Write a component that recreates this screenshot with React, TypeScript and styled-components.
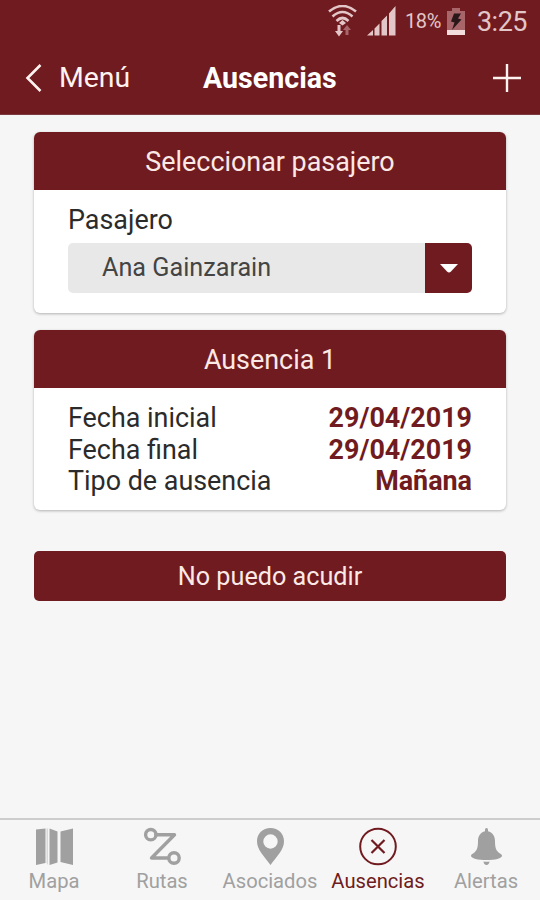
import React from "react";
import styled, { createGlobalStyle } from "styled-components";

const maroon = "#701b20";

const GlobalStyle = createGlobalStyle`
  * { box-sizing: border-box; }
  body { margin: 0; background: #f6f6f6; }
  button { font: inherit; border: 0; padding: 0; margin: 0; background: none; color: inherit; }
`;

const Screen = styled.div`
  display: flex;
  flex-direction: column;
  width: 540px;
  height: 900px;
  overflow: hidden;
  background: #f6f6f6;
  color: #2b2b2b;
  font-family: Roboto, "Liberation Sans", sans-serif;
`;

const Top = styled.header`
  flex: none;
  height: 115px;
  background: ${maroon};
  border-bottom: 1px solid #7d3a3e;
  color: #fdf3f0;
`;

const StatusBar = styled.div`
  display: flex;
  justify-content: flex-end;
  align-items: center;
  height: 42px;
  padding-right: 13px;
  color: #e3c6c7;
`;

const StatusIcon = styled.svg<{ $gap: number }>`
  display: block;
  flex: none;
  margin-right: ${(p) => p.$gap}px;
`;

const Percent = styled.span`
  font-size: 20px;
  line-height: 44px;
  letter-spacing: -0.4px;
  margin-right: 6px;
`;

const Clock = styled.span`
  font-size: 27px;
  line-height: 44px;
  letter-spacing: -0.5px;
  padding-top: 1px;
`;

const NavBar = styled.div`
  display: grid;
  grid-template-columns: 178px auto 1fr;
  align-items: center;
  height: 72px;
  padding: 0 19px 0 25px;
`;

const Back = styled.button`
  display: flex;
  align-items: center;
  gap: 17px;
  font-size: 28.4px;
  line-height: 34px;
`;

const Title = styled.h1`
  margin: 0;
  font-size: 28.6px;
  line-height: 34px;
  font-weight: 700;
  color: #fff;
`;

const Add = styled.button`
  justify-self: end;
  display: block;
  svg { display: block; }
`;

const Content = styled.main`
  flex: 1;
  display: flex;
  flex-direction: column;
  padding: 17px 34px 0;
`;

const Card = styled.section<{ $height: number }>`
  height: ${(p) => p.$height}px;
  margin-bottom: 17px;
  border-radius: 6px;
  overflow: hidden;
  background: #fff;
  box-shadow: 0 1px 3px rgba(0, 0, 0, 0.28);
`;

const CardHead = styled.h2`
  margin: 0;
  height: 58px;
  line-height: 61px;
  background: ${maroon};
  color: #fbe9e6;
  text-align: center;
  font-size: 26.9px;
  font-weight: 400;
`;

const CardBody = styled.div`
  padding: 15px 34px 0;
  font-size: 26.9px;
  line-height: 31.5px;
`;

const Select = styled.div`
  display: flex;
  height: 50px;
  margin-top: 6px;
  border-radius: 5px;
  overflow: hidden;
  background: #e8e8e8;
`;

const SelectValue = styled.span`
  flex: 1;
  padding-left: 34px;
  line-height: 50px;
  font-size: 25.2px;
  color: #444;
`;

const SelectArrow = styled.span`
  display: flex;
  align-items: center;
  justify-content: center;
  width: 47px;
  padding-top: 2px;
  background: ${maroon};
`;

const Row = styled.div`
  display: flex;
  justify-content: space-between;
`;

const Value = styled.strong`
  font-weight: 700;
  color: ${maroon};
`;

const Action = styled.button`
  height: 50px;
  margin-top: 24px;
  padding-top: 2px;
  border-radius: 5px;
  background: ${maroon};
  color: #fbe9e6;
  font-size: 25.2px;
  line-height: 48px;
`;

const TabBar = styled.nav`
  flex: none;
  display: grid;
  grid-template-columns: repeat(5, 108px);
  height: 82px;
  border-top: 2px solid #cdcdcd;
`;

const Tab = styled.button<{ $active?: boolean }>`
  display: flex;
  flex-direction: column;
  align-items: center;
  padding-top: 8px;
  color: ${(p) => (p.$active ? maroon : "#a0a0a0")};
  svg { display: block; overflow: visible; }
`;

const TabLabel = styled.span`
  margin-top: 1px;
  font-size: 20.2px;
  line-height: 24px;
  white-space: nowrap;
`;

const MapIcon = () => (
  <svg width="40" height="40" viewBox="0 0 40 40" fill="currentColor">
    <path d="M2 1.500 11.500 .5V35L2 37zM15.500 .5 23.500 3.500V34.500L15.500 37zM26.500 3.500 39 .5V37L26.500 34z" />
    <path d="M12.500 .5h1.500v36.500L12.500 35z" opacity=".35" />
  </svg>
);

const RouteIcon = () => (
  <svg width="40" height="40" viewBox="0 0 40 40" fill="none" stroke="currentColor" strokeWidth="3.400" strokeLinejoin="round" strokeLinecap="round">
    <circle cx="8.800" cy="6.700" r="5.200" />
    <circle cx="32" cy="30" r="5.200" />
    <path d="M14 6.700H32.500L9.500 30H26.500" />
  </svg>
);

const PinIcon = () => (
  <svg width="40" height="40" viewBox="0 0 40 40" fill="currentColor" fillRule="evenodd">
    <path d="M20.500 0C12.700 0 7 5.800 7 13.300 7 22 14 28 20.500 37 27 28 34 22 34 13.300 34 5.800 28.300 0 20.500 0zM20.500 6.300a7.200 7.200 0 1 1 0 14.400 7.200 7.200 0 0 1 0-14.400z" />
  </svg>
);

const CrossCircleIcon = () => (
  <svg width="40" height="40" viewBox="0 0 40 40" fill="none" stroke="currentColor" strokeWidth="2">
    <circle cx="20" cy="18.500" r="17.800" />
    <path d="M13.500 12 26.500 25M26.500 12 13.500 25" strokeWidth="2.200" />
  </svg>
);

const BellIcon = () => (
  <svg width="40" height="40" viewBox="0 0 40 40" fill="currentColor">
    <path d="M20.500 0c1 0 1.500.8 1.500 2v1.200C26.500 4.200 29 8 29 13c0 6.500 1 9 3.300 11.200 1.700 1.400 3.700 2 3.700 3.500C36 30.500 29 32 20.500 32S5 30.500 5 27.700c0-1.500 2-2.100 3.700-3.500C11 22 12 19.500 12 13c0-5 2.500-8.800 7-9.800V2c0-1.200.5-2 1.500-2z" />
    <path d="M17.500 33.500c2 .3 4 .3 6 0-.2 2.200-1.400 3.500-3 3.500s-2.800-1.300-3-3.500z" />
  </svg>
);

const tabs = [
  { label: "Mapa", icon: <MapIcon /> },
  { label: "Rutas", icon: <RouteIcon /> },
  { label: "Asociados", icon: <PinIcon /> },
  { label: "Ausencias", icon: <CrossCircleIcon />, active: true },
  { label: "Alertas", icon: <BellIcon /> },
];

const absence = [
  ["Fecha inicial", "29/04/2019"],
  ["Fecha final", "29/04/2019"],
  ["Tipo de ausencia", "Mañana"],
];

export default function App() {
  return (
    <Screen>
      <GlobalStyle />
      <Top>
        <StatusBar>
          <StatusIcon $gap={10} width="29" height="32" viewBox="0 0 29 32" fill="none" stroke="currentColor" strokeWidth="2.600">
            <path d="M1 6.500Q14.500-4.500 28 6.500M4.500 11.500Q14.500 2.500 24.500 11.500M8.500 16Q14.500 10 20.500 16" />
            <path d="M11 18 14.500 15l3.500 3-3.500 2.500z" fill="currentColor" stroke="none" />
            <path d="M9.500 20h3v6h2.500L11 31.500 7 26h2.500z" fill="currentColor" stroke="none" />
            <path d="M17.500 30h3v-5H23L19 20l-4 5h2.500z" fill="#a8656a" stroke="none" />
          </StatusIcon>
          <StatusIcon $gap={9} width="29" height="30" viewBox="0 0 29 30" fill="currentColor">
            <path d="M0 29.500 6 24V29.500zM7.500 22.500 12.500 17.500V29.500H7.500zM14.500 15 20 9.500V29.500H14.500zM22 7.500 28.500 0V29.500H22z" />
          </StatusIcon>
          <Percent>18%</Percent>
          <StatusIcon $gap={12} width="18" height="27" viewBox="0 0 18 27">
            <path d="M5 0H13V3H18V27H0V3H5z" fill="#a8656a" />
            <path d="M0 22H18V27H0z" fill="#f3dedd" />
            <path d="M7 5.500H14L11 10.500 14.500 11.500 5 22 7.500 14.500 4 13.500z" fill="#291719" />
          </StatusIcon>
          <Clock>3:25</Clock>
        </StatusBar>
        <NavBar>
          <Back>
            <svg width="17" height="28" viewBox="0 0 17 28" fill="none" stroke="currentColor" strokeWidth="2.600">
              <path d="M15.500 1 2.500 14 15.500 27" />
            </svg>
            Menú
          </Back>
          <Title>Ausencias</Title>
          <Add>
            <svg width="28" height="28" viewBox="0 0 28 28" stroke="currentColor" strokeWidth="2.400">
              <path d="M14 0V28M0 14H28" />
            </svg>
          </Add>
        </NavBar>
      </Top>
      <Content>
        <Card $height={181}>
          <CardHead>Seleccionar pasajero</CardHead>
          <CardBody>
            <div>Pasajero</div>
            <Select>
              <SelectValue>Ana Gainzarain</SelectValue>
              <SelectArrow>
                <svg width="18" height="9" viewBox="0 0 18 9" fill="#fff">
                  <path d="M0 0H18L11 7.500Q9 9.300 7 7.500z" />
                </svg>
              </SelectArrow>
            </Select>
          </CardBody>
        </Card>
        <Card $height={180}>
          <CardHead>Ausencia 1</CardHead>
          <CardBody>
            {absence.map(([label, value]) => (
              <Row key={label}>
                <span>{label}</span>
                <Value>{value}</Value>
              </Row>
            ))}
          </CardBody>
        </Card>
        <Action>No puedo acudir</Action>
      </Content>
      <TabBar>
        {tabs.map((t) => (
          <Tab key={t.label} $active={t.active}>
            {t.icon}
            <TabLabel>{t.label}</TabLabel>
          </Tab>
        ))}
      </TabBar>
    </Screen>
  );
}
